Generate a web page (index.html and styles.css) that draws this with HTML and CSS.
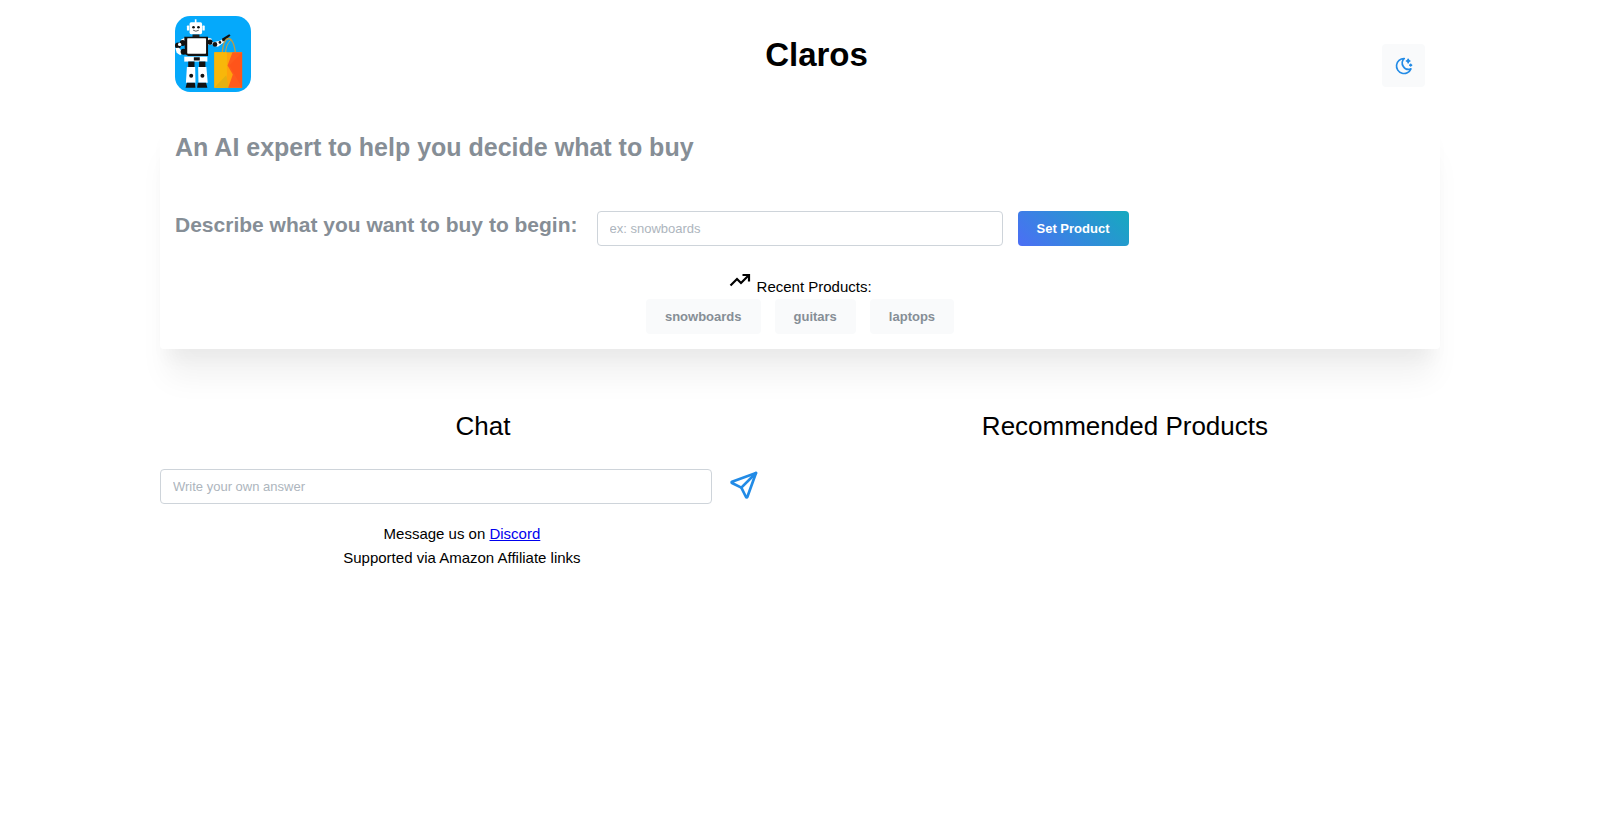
FILE: index.html
```html
<!DOCTYPE html>
<html lang="en">
<head>
<meta charset="utf-8">
<title>Claros</title>
<link rel="stylesheet" href="styles.css">
</head>
<body>
<div class="page">
  <header class="header">
    <svg class="logo" viewBox="0 0 230 230" role="img" aria-label="Claros logo">
      <rect width="230" height="230" rx="46" fill="#05a9fb"/>
      <g fill="#fff">
        <rect x="60" y="10" width="5" height="14"/>
        <rect x="44" y="19" width="38" height="36" rx="5"/>
        <rect x="36" y="29" width="7" height="15" rx="2"/>
        <rect x="83" y="29" width="7" height="15" rx="2"/>
      </g>
      <circle cx="56" cy="34" r="4" fill="#111"/><circle cx="71" cy="34" r="4" fill="#111"/>
      <path d="M55 43q8 6 17 0" fill="none" stroke="#111" stroke-width="2"/>
      <path d="M53 56h21v8H53z" fill="#222"/>
      <path d="M18 72l14-8v20l-12 6z" fill="#fff"/>
      <circle cx="23" cy="82" r="9" fill="#111"/>
      <circle cx="9" cy="89" r="9" fill="#111"/><circle cx="14" cy="86" r="5" fill="#fff"/>
      <path d="M1 97l11-1 12 15-8 8-11-8z" fill="#fff"/>
      <circle cx="26" cy="108" r="9" fill="#111"/>
      <path d="M98 66l12 2 4 18-16 0z" fill="#fff"/>
      <circle cx="106" cy="79" r="8" fill="#111"/>
      <path d="M112 80l24-5 10-6 4 9-20 15-12-2z" fill="#fff"/>
      <circle cx="121" cy="86" r="7" fill="#111"/><circle cx="136" cy="80" r="4" fill="#111"/>
      <path d="M142 69l22-14 4 4-18 17-6 1z" fill="#111"/>
      <path d="M28 63h72v58H40L24 112l6-4z" fill="#111"/>
      <rect x="37" y="67" width="57" height="47" rx="2" fill="#fff"/>
      <path d="M28 123h70v15H28z" fill="#fff"/>
      <path d="M40 138h19v16H40zM73 138h19v16H73zM57 125h18v10H57z" fill="#111"/>
      <path d="M36 154h25l1 48H33zM70 154h25l4 48H71z" fill="#fff"/>
      <circle cx="49" cy="181" r="6" fill="#111"/><circle cx="83" cy="181" r="6" fill="#111"/>
      <path d="M36 202h24l2 15H32zM69 202h25l4 15H67z" fill="#111"/>
      <path d="M143 111q4-42 19-43 15 1 21 43" fill="none" stroke="#b99b4b" stroke-width="4"/>
      <path d="M153 111q2-25 15-37" fill="none" stroke="#d4a23c" stroke-width="3"/>
      <path d="M119 110h84v107h-84z" fill="#ffa30b"/>
      <path d="M119 110h38v70l-6 37h-32z" fill="#f8b70a"/>
      <path d="M119 217l36-38 8 38z" fill="#e3b012"/>
      <path d="M174 110h29v107h-42l14-40-16-27z" fill="#ff5b1d"/>
      <path d="M203 110v107l-38-67z" fill="#ff541a"/>
    </svg>
    <h1 class="title">Claros</h1>
    <button class="theme-toggle" type="button" aria-label="Toggle color scheme">
      <svg width="20" height="20" viewBox="0 0 24 24" fill="none" stroke="currentColor" stroke-width="2" stroke-linecap="round" stroke-linejoin="round"><path d="M12 3c.132 0 .263 0 .393 0a7.5 7.5 0 0 0 7.92 12.446a9 9 0 1 1 -8.313 -12.454z"/><path d="M17 4a2 2 0 0 0 2 2a2 2 0 0 0 -2 2a2 2 0 0 0 -2 -2a2 2 0 0 0 2 -2"/><path d="M19 11h2m-1 -1v2"/></svg>
    </button>
  </header>

  <section class="card">
    <h2 class="tagline">An AI expert to help you decide what to buy</h2>
    <form class="product-form">
      <label class="prompt" for="product">Describe what you want to buy to begin:</label>
      <input class="field product-field" id="product" type="text" placeholder="ex: snowboards">
      <button class="button button-primary" type="button">Set Product</button>
    </form>
    <div class="recent">
      <p class="recent-label"><svg width="24" height="24" viewBox="0 0 24 24" fill="none" stroke="currentColor" stroke-width="2.200" aria-hidden="true"><path d="M2.500 17.500l6.500-6.500 4 4 7.500-7.500"/><path d="M14.500 7h6.500v6.500"/></svg> Recent Products:</p>
      <div class="chips">
        <button class="button chip" type="button">snowboards</button>
        <button class="button chip" type="button">guitars</button>
        <button class="button chip" type="button">laptops</button>
      </div>
    </div>
  </section>

  <main class="columns">
    <section>
      <h2 class="column-title">Chat</h2>
      <div class="chat-body">
        <form class="chat-form">
          <input class="field chat-field" type="text" placeholder="Write your own answer" aria-label="Write your own answer">
          <button class="send" type="button" aria-label="Send">
            <svg width="32" height="32" viewBox="0 0 24 24" fill="none" stroke="currentColor" stroke-width="2" stroke-linecap="round" stroke-linejoin="round"><path d="M10 14L21 3"/><path d="M21 3l-6.500 18a.55 .55 0 0 1 -1 0l-3.500 -7l-7 -3.500a.55 .55 0 0 1 0 -1l18 -6.500"/></svg>
          </button>
        </form>
        <footer class="footer">
          <p>Message us on <a href="#discord">Discord</a></p>
          <p>Supported via Amazon Affiliate links</p>
        </footer>
      </div>
    </section>
    <section>
      <h2 class="column-title">Recommended Products</h2>
    </section>
  </main>
</div>
</body>
</html>
```

FILE: styles.css
```css
* {
  box-sizing: border-box;
}

body {
  margin: 0;
  background: #fff;
  color: #000;
  font-family: "Liberation Sans", Arial, sans-serif;
  font-size: 15px;
  line-height: 24px;
}

h1, h2, p {
  margin: 0;
}

svg {
  flex: none;
}

button, input {
  font: inherit;
}

.page {
  width: 80%;
  margin: 0 auto;
}

.header {
  display: flex;
  align-items: center;
  justify-content: space-between;
  padding: 16px 15px 23px;
}

.logo {
  width: 76px;
  height: 76px;
}

.title {
  font-size: 33px;
  line-height: 45px;
}

.theme-toggle {
  display: grid;
  place-items: center;
  width: 43px;
  height: 43px;
  margin-top: 23px;
  padding: 0;
  border: 0;
  border-radius: 4px;
  background: #f9fafb;
  color: #228be6;
}

.card {
  padding: 15px;
  border-radius: 4px;
  background: #fff;
  box-shadow: 0 36px 28px -7px rgba(0, 0, 0, 0.05), 0 17px 17px -7px rgba(0, 0, 0, 0.04);
}

.tagline {
  color: #868e96;
  font-size: 25px;
  line-height: 35px;
}

.product-form {
  display: flex;
  align-items: flex-start;
  gap: 15px;
  margin-top: 46px;
}

.prompt {
  margin-right: 4px;
  color: #868e96;
  font-size: 21px;
  font-weight: 700;
  line-height: 28px;
}

.field {
  min-width: 0;
  height: 35px;
  padding: 0 12px;
  border: 1px solid #ced4da;
  border-radius: 4px;
  background: #fff;
  color: #000;
  font-size: 13px;
}

.field::placeholder {
  color: #adb5bd;
  opacity: 1;
}

.product-field {
  flex: 0 1 406px;
}

.button {
  height: 35px;
  padding: 0 19px;
  border: 0;
  border-radius: 4px;
  font-size: 13px;
  font-weight: 700;
}

.button-primary {
  background: linear-gradient(45deg, #4c6ef5, #15aabf);
  color: #fff;
}

.recent {
  margin-top: 22px;
}

.recent-label {
  text-align: center;
}

.chips {
  display: flex;
  justify-content: center;
  gap: 14px;
}

.chip {
  background: #f9fafb;
  color: #868e96;
}

.columns {
  display: grid;
  grid-template-columns: 41fr 40fr;
  gap: 4px;
  padding-top: 57px;
}

.column-title {
  font-size: 26px;
  font-weight: 400;
  line-height: 40px;
  text-align: center;
}

.chat-body {
  padding: 23px 42px 0 0;
}

.chat-form {
  display: flex;
  align-items: flex-start;
  gap: 12px;
}

.chat-field {
  flex: 1;
}

.send {
  display: grid;
  place-items: center;
  width: 40px;
  height: 32px;
  padding: 0;
  border: 0;
  background: none;
  color: #228be6;
}

.footer {
  padding-top: 18px;
  text-align: center;
}

.footer a {
  color: #0000ee;
}
```
